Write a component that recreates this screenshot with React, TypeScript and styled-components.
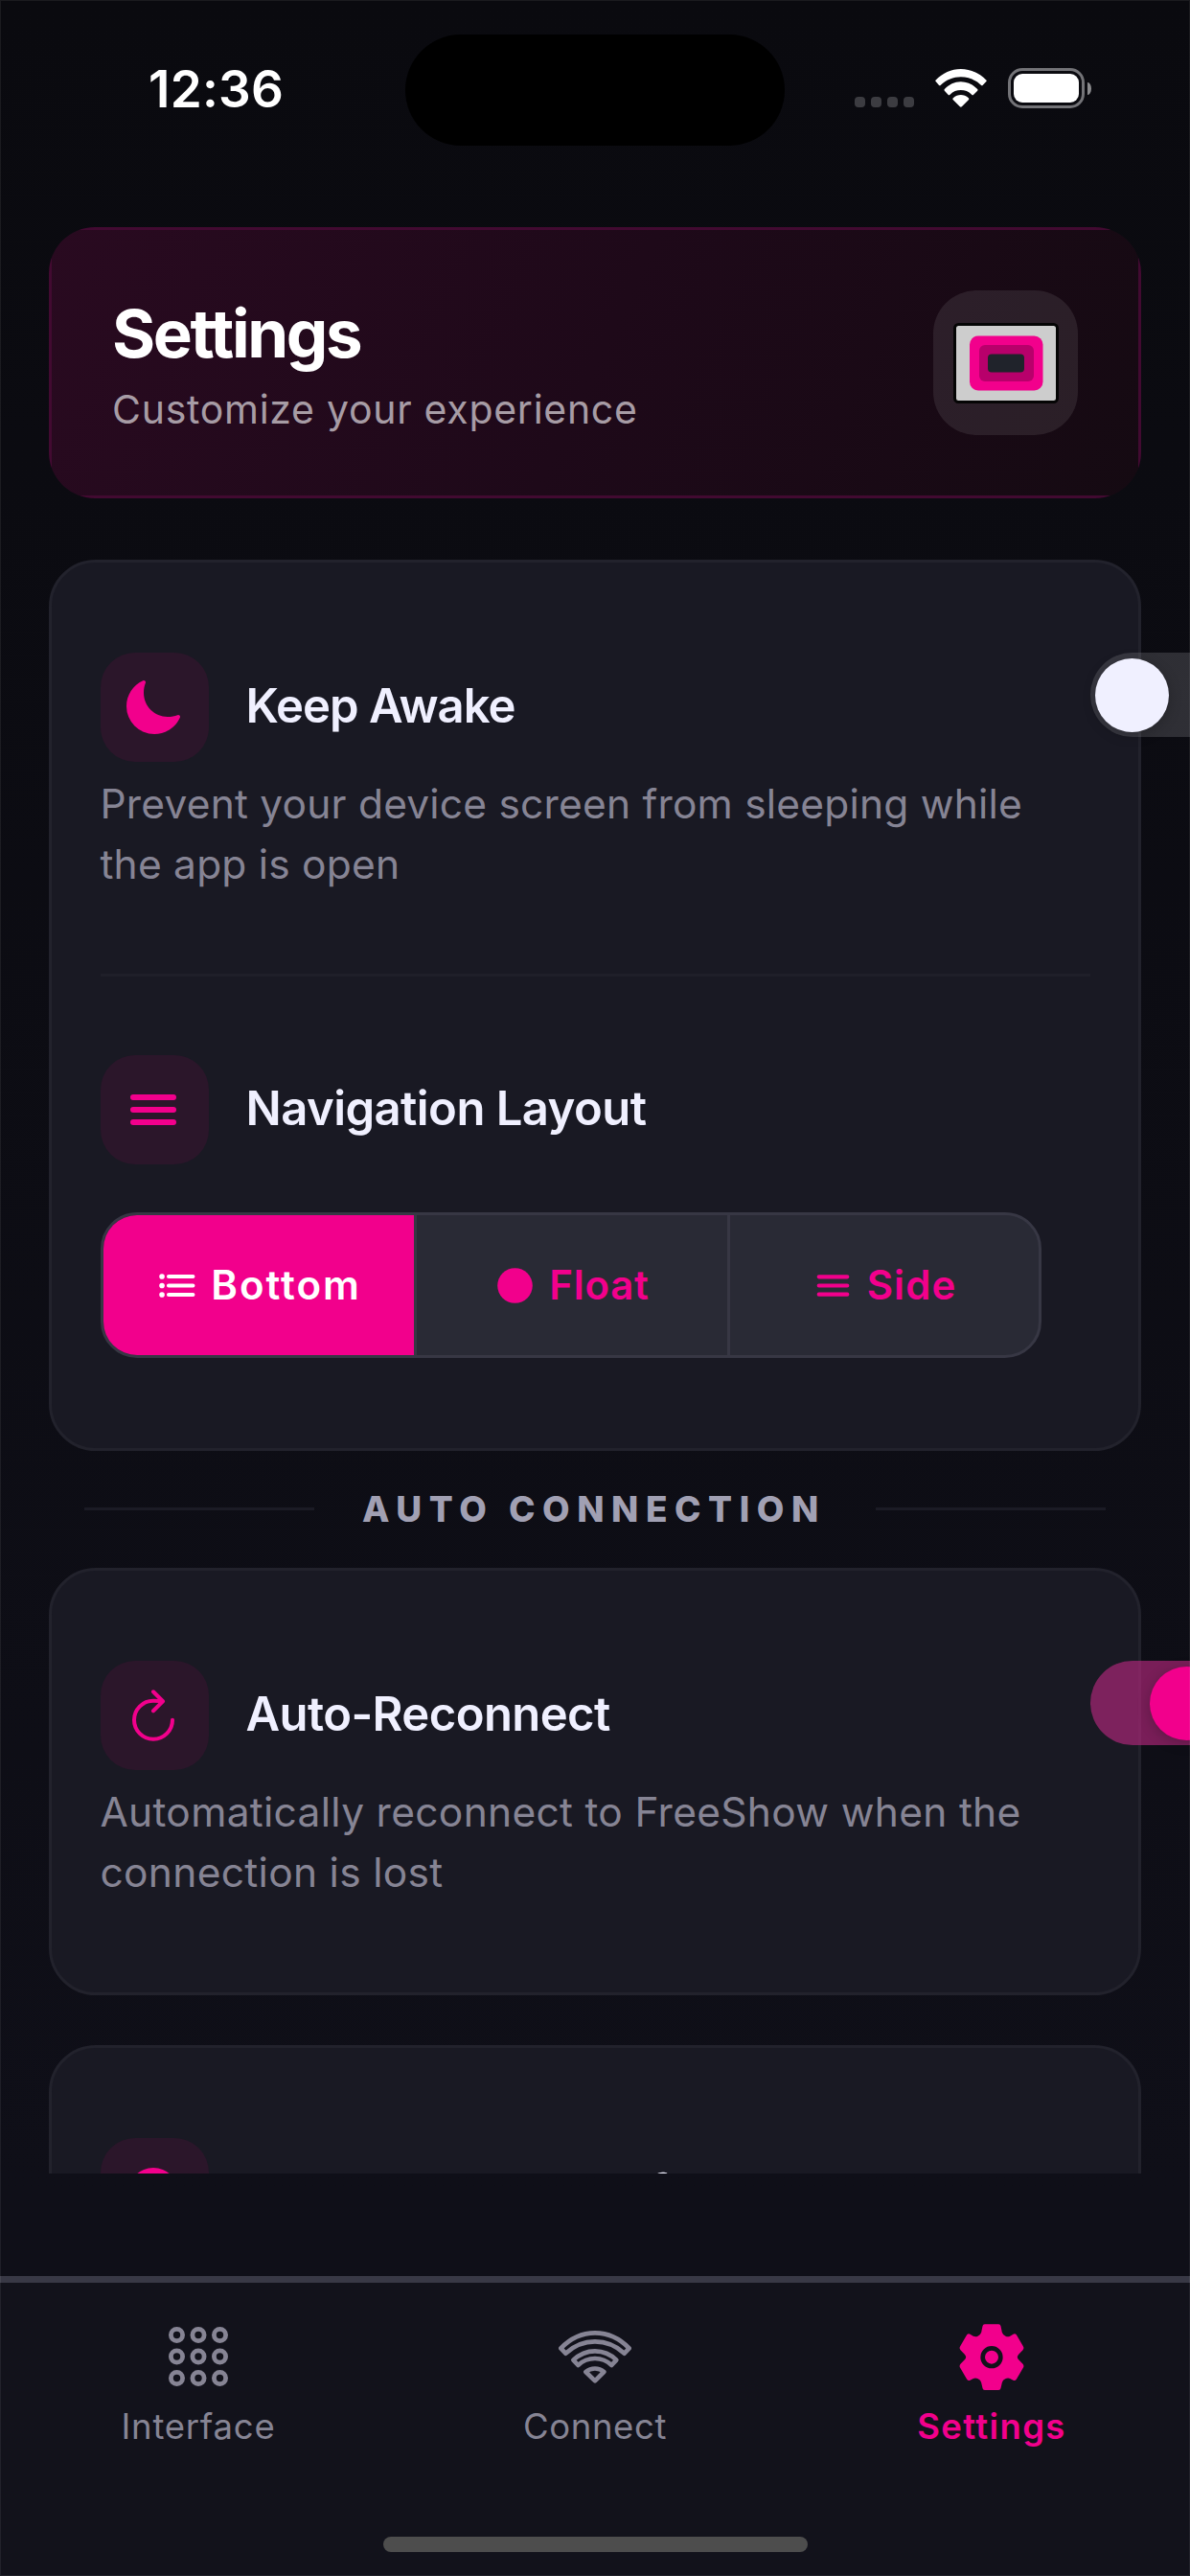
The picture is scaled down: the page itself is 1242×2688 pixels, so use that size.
import React from 'react';
import styled, { createGlobalStyle } from 'styled-components';

const pink = '#f2008c';

const GlobalStyle = createGlobalStyle`
  *, *::before, *::after { box-sizing: border-box; }
  body {
    margin: 0;
    background: #0a0a0f;
    font-family: Inter, 'Liberation Sans', sans-serif;
    overflow: hidden;
  }
`;

const Screen = styled.div`
  position: relative;
  display: flex;
  flex-direction: column;
  width: 1242px;
  height: 2688px;
  overflow: hidden;
  background: linear-gradient(180deg, #0a0a0f 0%, #0f0f18 85%);

  /* hairline around the display */
  &::after {
    content: '';
    position: absolute;
    inset: 0;
    border: 1px solid rgba(255, 255, 255, 0.07);
    pointer-events: none;
  }
`;

/* Status bar */

const StatusBar = styled.header`
  flex: none;
  display: grid;
  grid-template-columns: 423px 396px 1fr;
  height: 237px;
  padding-top: 36px;
  align-items: start;
`;

const Clock = styled.div`
  padding-left: 155px;
  font-size: 53px;
  font-weight: 600;
  line-height: 114px;
  letter-spacing: 0.24px;
  color: #fff;
`;

const Island = styled.div`
  height: 116px;
  border-radius: 58px;
  background: #000;
`;

const StatusIcons = styled.div`
  display: flex;
  align-items: center;
  height: 112px;
  padding-left: 72.5px;
`;

const SignalDots = styled.div`
  display: flex;
  gap: 6px;
  margin-right: 22px;
  padding-top: 28px;
`;

const SignalDot = styled.span`
  width: 11px;
  height: 11px;
  border-radius: 4px;
  background: #3c3c41;
`;

const StatusWifi = styled.svg`
  width: 54px;
  height: 40px;
  margin-right: 22.5px;
`;

const BatteryBody = styled.div`
  width: 80px;
  height: 42px;
  padding: 3px;
  border: 3px solid #737377;
  border-radius: 15px;
`;

const BatteryFill = styled.div`
  height: 100%;
  border-radius: 9px;
  background: #fff;
`;

const BatteryTip = styled.div`
  width: 4px;
  height: 13px;
  margin-left: 3px;
  border-radius: 0 4px 4px 0 / 0 7px 7px 0;
  background: #8a8a8d;
`;

/* Scrolling content */

const Content = styled.main`
  flex: none;
  height: 2031px;
  padding: 0 51px;
  overflow: hidden;
`;

const Hero = styled.section`
  height: 283px;
  margin-bottom: 64px;
  border-radius: 48px;
  overflow: hidden;
`;

const HeroInner = styled.div`
  display: flex;
  align-items: center;
  justify-content: space-between;
  height: 100%;
  padding: 0 63px;
  border: 3px solid #420a31;
  background: linear-gradient(115deg, #290a20 0%, #1e0919 50%, #150a12 100%);
  background-clip: padding-box;
`;

const HeroTitle = styled.h1`
  margin: 0;
  font-size: 69px;
  font-weight: 700;
  line-height: 84px;
  letter-spacing: -2.38px;
  color: #fff;
`;

const HeroSubtitle = styled.p`
  margin: 13px 0 0;
  font-size: 41px;
  line-height: 49px;
  letter-spacing: 0.72px;
  color: #a79ca5;
`;

const LogoTile = styled.div`
  display: flex;
  align-items: center;
  justify-content: center;
  width: 151px;
  height: 151px;
  border-radius: 45px;
  background: rgba(255, 255, 255, 0.085);
`;

const Card = styled.section`
  margin-bottom: 51.5px;
  padding: 94px 50.5px;
  border: 3px solid #22222c;
  border-radius: 49px;
  background: #191923;
`;

const ItemHead = styled.div`
  display: flex;
  width: 100%;
`;

const ItemLabel = styled.div`
  flex: 0 0 100%;
  display: flex;
  align-items: center;
  gap: 38.5px;
`;

const IconTile = styled.div`
  display: flex;
  align-items: center;
  justify-content: center;
  width: 113.5px;
  height: 113.5px;
  padding-right: 2.5px;
  border-radius: 36px;
  background: #2b162a;
  color: ${pink};
`;

const ItemTitle = styled.h2<{ $tracking: number }>`
  margin: 0;
  padding-bottom: 1px;
  font-size: 49px;
  font-weight: 600;
  line-height: 64px;
  letter-spacing: ${(p) => p.$tracking}px;
  white-space: nowrap;
  color: #f0f0ff;
`;

const Description = styled.p<{ $tracking: number }>`
  margin: 13.5px 0 0;
  font-size: 42.5px;
  line-height: 62.7px;
  letter-spacing: ${(p) => p.$tracking}px;
  white-space: pre;
  color: #868494;
`;

const Divider = styled.hr`
  height: 3px;
  margin: 82.600px 0 82px;
  border: 0;
  background: #1f1f29;
`;

const Track = styled.button<{ $on: boolean }>`
  flex: none;
  display: flex;
  justify-content: ${(p) => (p.$on ? 'flex-end' : 'flex-start')};
  align-items: center;
  width: 145px;
  height: 88px;
  padding: 0 5.5px;
  border: 0;
  border-radius: 44px;
  background: ${(p) => (p.$on ? 'rgba(180, 40, 124, 0.65)' : 'rgba(120, 120, 128, 0.32)')};
`;

const Knob = styled.span<{ $on: boolean }>`
  width: 77px;
  height: 77px;
  border-radius: 50%;
  background: ${(p) => (p.$on ? pink : '#f0f0ff')};
  box-shadow: 0 3px 14px rgba(0, 0, 0, 0.22);
`;

const Segments = styled.div`
  display: grid;
  grid-template-columns: 324px 327px 1fr;
  width: 982px;
  height: 152px;
  margin-top: 50.5px;
  border: 3px solid #373744;
  border-radius: 38px;
  overflow: hidden;
  background: #292a35;
`;

const Segment = styled.button<{ $active?: boolean; $divided?: boolean }>`
  display: flex;
  align-items: center;
  justify-content: center;
  gap: 13px;
  padding: 0;
  border: 0;
  border-left: ${(p) => (p.$divided ? '3px solid #373744' : '0')};
  background: ${(p) => (p.$active ? pink : 'transparent')};
  color: ${(p) => (p.$active ? '#fff' : pink)};
`;

const SegmentText = styled.span<{ $tracking: number }>`
  font-family: Inter, 'Liberation Sans', sans-serif;
  font-size: 42px;
  font-weight: 600;
  line-height: 56px;
  letter-spacing: ${(p) => p.$tracking}px;
`;

const SectionHeading = styled.div`
  display: grid;
  grid-template-columns: 240px 1fr 240px;
  align-items: center;
  height: 122px;
  margin-top: -51.5px;
  padding: 0 37px;
`;

const HeadingRule = styled.div`
  height: 3px;
  margin-bottom: 2px;
  background: #1b1b25;
`;

const HeadingText = styled.h3`
  margin: 0;
  padding-left: 50px;
  font-size: 37px;
  font-weight: 800;
  line-height: 48px;
  letter-spacing: 7.55px;
  white-space: nowrap;
  color: #a1a0b3;
`;

/* Tab bar */

const TabBar = styled.nav`
  display: grid;
  grid-template-columns: repeat(3, 1fr);
  grid-template-rows: 1fr auto;
  height: 313px;
  margin-top: auto;
  padding-top: 38px;
  border-top: 7px solid #383845;
  background: #12121b;
`;

const Tab = styled.a<{ $active?: boolean }>`
  display: flex;
  flex-direction: column;
  align-items: center;
  color: ${(p) => (p.$active ? pink : '#868494')};
`;

const TabIcon = styled.div`
  display: flex;
  align-items: center;
  justify-content: center;
  height: 78px;
`;

const TabText = styled.span<{ $tracking: number; $bold?: boolean }>`
  margin-top: 10px;
  font-size: 36.5px;
  font-weight: ${(p) => (p.$bold ? 600 : 400)};
  line-height: 48px;
  letter-spacing: ${(p) => p.$tracking}px;
`;

const HomeIndicator = styled.div`
  grid-column: 1 / -1;
  justify-self: center;
  width: 443px;
  height: 16px;
  margin-bottom: 25px;
  border-radius: 8px;
  background: #4d4d4d;
`;

/* Icons */

type IconProps = { size: number };

const Moon = ({ size }: IconProps) => (
  <svg width={size} height={size} viewBox="0 0 512 512" fill="currentColor">
    <path d="M264 480A232 232 0 0132 248c0-94 54-178.28 137.61-214.67a16 16 0 0121.06 21.06C181.07 76.43 176 104.66 176 136c0 110.28 89.72 200 200 200 31.34 0 59.57-5.07 81.61-14.67a16 16 0 0121.06 21.06C442.28 426 358 480 264 480z" />
  </svg>
);

const Menu = ({ size }: IconProps) => (
  <svg width={size} height={size} viewBox="0 0 512 512" fill="none" stroke="currentColor" strokeWidth="48" strokeLinecap="round">
    <path d="M88 152h336M88 256h336M88 360h336" />
  </svg>
);

const List = ({ size }: IconProps) => (
  <svg width={size} height={size} viewBox="0 0 512 512" fill="none" stroke="currentColor" strokeWidth="48" strokeLinecap="round">
    <path d="M160 148h288M160 256h288M160 364h288" />
    <g fill="currentColor" stroke="none">
      <circle cx="80" cy="148" r="32" />
      <circle cx="80" cy="256" r="32" />
      <circle cx="80" cy="364" r="32" />
    </g>
  </svg>
);

const Disc = ({ size }: IconProps) => (
  <svg width={size} height={size} viewBox="0 0 512 512" fill="currentColor">
    <circle cx="256" cy="256" r="208" />
  </svg>
);

const Refresh = ({ size }: IconProps) => (
  <svg width={size} height={size} viewBox="0 0 512 512" fill="none" stroke="currentColor" strokeWidth="32" strokeLinecap="round">
    <path strokeMiterlimit="10" d="M320 146s24.36-12-64-12a160 160 0 10160 160" />
    <path strokeLinejoin="round" d="M256 58l80 80-80 80" />
  </svg>
);

const Logo = () => (
  <svg width="110" height="84" viewBox="0 0 110 84">
    <rect x="1.5" y="1.5" width="107" height="81" rx="4" fill="#cdcdcd" stroke="#050505" strokeWidth="3" />
    <rect x="17" y="13.5" width="76.5" height="57" rx="9" fill={pink} />
    <rect x="27" y="23" width="57" height="38" rx="6" fill="#b8006b" />
    <rect x="36" y="32.5" width="38" height="19" rx="4" fill="#20232b" />
  </svg>
);

const Grid = () => (
  <svg width="62" height="62" viewBox="0 0 62 62" fill="none" stroke="currentColor" strokeWidth="4.8">
    {[8.5, 31, 53.5].map((cy) => [8.5, 31, 53.5].map((cx) => <circle key={`${cx}-${cy}`} cx={cx} cy={cy} r="6.1" />))}
  </svg>
);

const WifiOutline = () => (
  <svg width="76" height="55" viewBox="38 63 228 165" fill="none" stroke="currentColor" strokeWidth="14" strokeLinejoin="round">
    <path d="M45 118C75 87 111 70 152 70s77 17 107 48L244 134C218 110 186 97 152 97s-66 13-92 37z" />
    <path d="M84 155c19-18 42-28 68-28s49 10 67 28l-15 16c-15-14-32-21-52-21s-38 7-53 21z" />
    <path d="M123 192c17-14 41-14 57 0l-28 28z" />
  </svg>
);

const Gear = () => (
  <svg width="68" height="69" viewBox="1292 42 203 207">
    <path
      fill="currentColor"
      d="M1372 43H1415Q1421 43 1422 49L1426 68Q1429 77 1437 80Q1444 83 1451 80L1461 74Q1467 71 1471 76L1492 112Q1496 118 1491 124L1478 137Q1470 145.500 1478 154L1491 167Q1496 173 1492 179L1471 215Q1467 221 1461 218L1451 213Q1444 210 1436 214Q1428 217 1426 226L1422 243Q1421 249 1415 249H1372Q1366 249 1365 243L1361 226Q1359 217 1351 214Q1343 210 1336 213L1326 218Q1320 221 1316 215L1295 179Q1291 173 1296 167L1309 154Q1317 145.500 1309 137L1296 124Q1291 118 1295 112L1316 76Q1320 71 1326 74L1336 80Q1343 83 1350 80Q1358 77 1361 68L1365 49Q1366 43 1372 43Z"
    />
    <circle cx="1393.500" cy="146" r="28" fill="none" stroke="#12121b" strokeWidth="14" />
  </svg>
);

export default function App() {
  return (
    <>
      <GlobalStyle />
      <Screen>
        <StatusBar>
          <Clock>12:36</Clock>
          <Island />
          <StatusIcons>
            <SignalDots>
              <SignalDot />
              <SignalDot />
              <SignalDot />
              <SignalDot />
            </SignalDots>
            <StatusWifi viewBox="317 66 161 120" fill="#fff">
              <path d="M318 101C340 79 367 66 397 66s58 13 80 35c2 2 0 4-1 5L466 116c-2 2-4 2-6 0C442 100 421 91 397 91s-45 9-63 25c-2 2-4 2-6 0L319 106c-1-1-3-3-1-5z" />
              <path d="M346 129C360 115 377 106 397 106s38 9 52 23c2 2 1 4 0 5L437 146c-2 2-4 2-6 0C421 136 410 132 397 132s-24 4-34 14c-2 2-4 2-6 0L346 134c-1-1-2-3 0-5z" />
              <path d="M373 157c14-13 34-13 48 0c2 2 2 4 0 6L400 184c-2 2-4 2-6 0L373 163c-2-2-2-4 0-6z" />
            </StatusWifi>
            <BatteryBody>
              <BatteryFill />
            </BatteryBody>
            <BatteryTip />
          </StatusIcons>
        </StatusBar>

        <Content>
          <Hero>
            <HeroInner>
              <div>
                <HeroTitle>Settings</HeroTitle>
                <HeroSubtitle>Customize your experience</HeroSubtitle>
              </div>
              <LogoTile>
                <Logo />
              </LogoTile>
            </HeroInner>
          </Hero>

          <Card>
            <ItemHead>
              <ItemLabel>
                <IconTile>
                  <Moon size={64} />
                </IconTile>
                <ItemTitle $tracking={-0.96}>Keep Awake</ItemTitle>
              </ItemLabel>
              <Track $on={false}>
                <Knob $on={false} />
              </Track>
            </ItemHead>
            <Description $tracking={0.2}>{'Prevent your device screen from sleeping while\nthe app is open'}</Description>
            <Divider />
            <ItemHead>
              <ItemLabel>
                <IconTile>
                  <Menu size={64} />
                </IconTile>
                <ItemTitle $tracking={-0.55}>Navigation Layout</ItemTitle>
              </ItemLabel>
            </ItemHead>
            <Segments>
              <Segment $active>
                <List size={45} />
                <SegmentText $tracking={2}>Bottom</SegmentText>
              </Segment>
              <Segment $divided>
                <Disc size={45} />
                <SegmentText $tracking={0.75}>Float</SegmentText>
              </Segment>
              <Segment $divided>
                <Menu size={45} />
                <SegmentText $tracking={1.09}>Side</SegmentText>
              </Segment>
            </Segments>
          </Card>

          <SectionHeading>
            <HeadingRule />
            <HeadingText>AUTO CONNECTION</HeadingText>
            <HeadingRule />
          </SectionHeading>

          <Card>
            <ItemHead>
              <ItemLabel>
                <IconTile>
                  <Refresh size={64} />
                </IconTile>
                <ItemTitle $tracking={-0.6}>Auto-Reconnect</ItemTitle>
              </ItemLabel>
              <Track $on>
                <Knob $on />
              </Track>
            </ItemHead>
            <Description $tracking={0.3}>{'Automatically reconnect to FreeShow when the\nconnection is lost'}</Description>
          </Card>

          <Card>
            <ItemLabel>
              <IconTile>
                <Disc size={64} />
              </IconTile>
              <ItemTitle $tracking={-0.6}>Auto-Launch Interface</ItemTitle>
            </ItemLabel>
          </Card>
        </Content>

        <TabBar>
          <Tab>
            <TabIcon>
              <Grid />
            </TabIcon>
            <TabText $tracking={0.77}>Interface</TabText>
          </Tab>
          <Tab>
            <TabIcon>
              <WifiOutline />
            </TabIcon>
            <TabText $tracking={0.62}>Connect</TabText>
          </Tab>
          <Tab $active>
            <TabIcon>
              <Gear />
            </TabIcon>
            <TabText $tracking={1.35} $bold>
              Settings
            </TabText>
          </Tab>
          <HomeIndicator />
        </TabBar>
      </Screen>
    </>
  );
}
